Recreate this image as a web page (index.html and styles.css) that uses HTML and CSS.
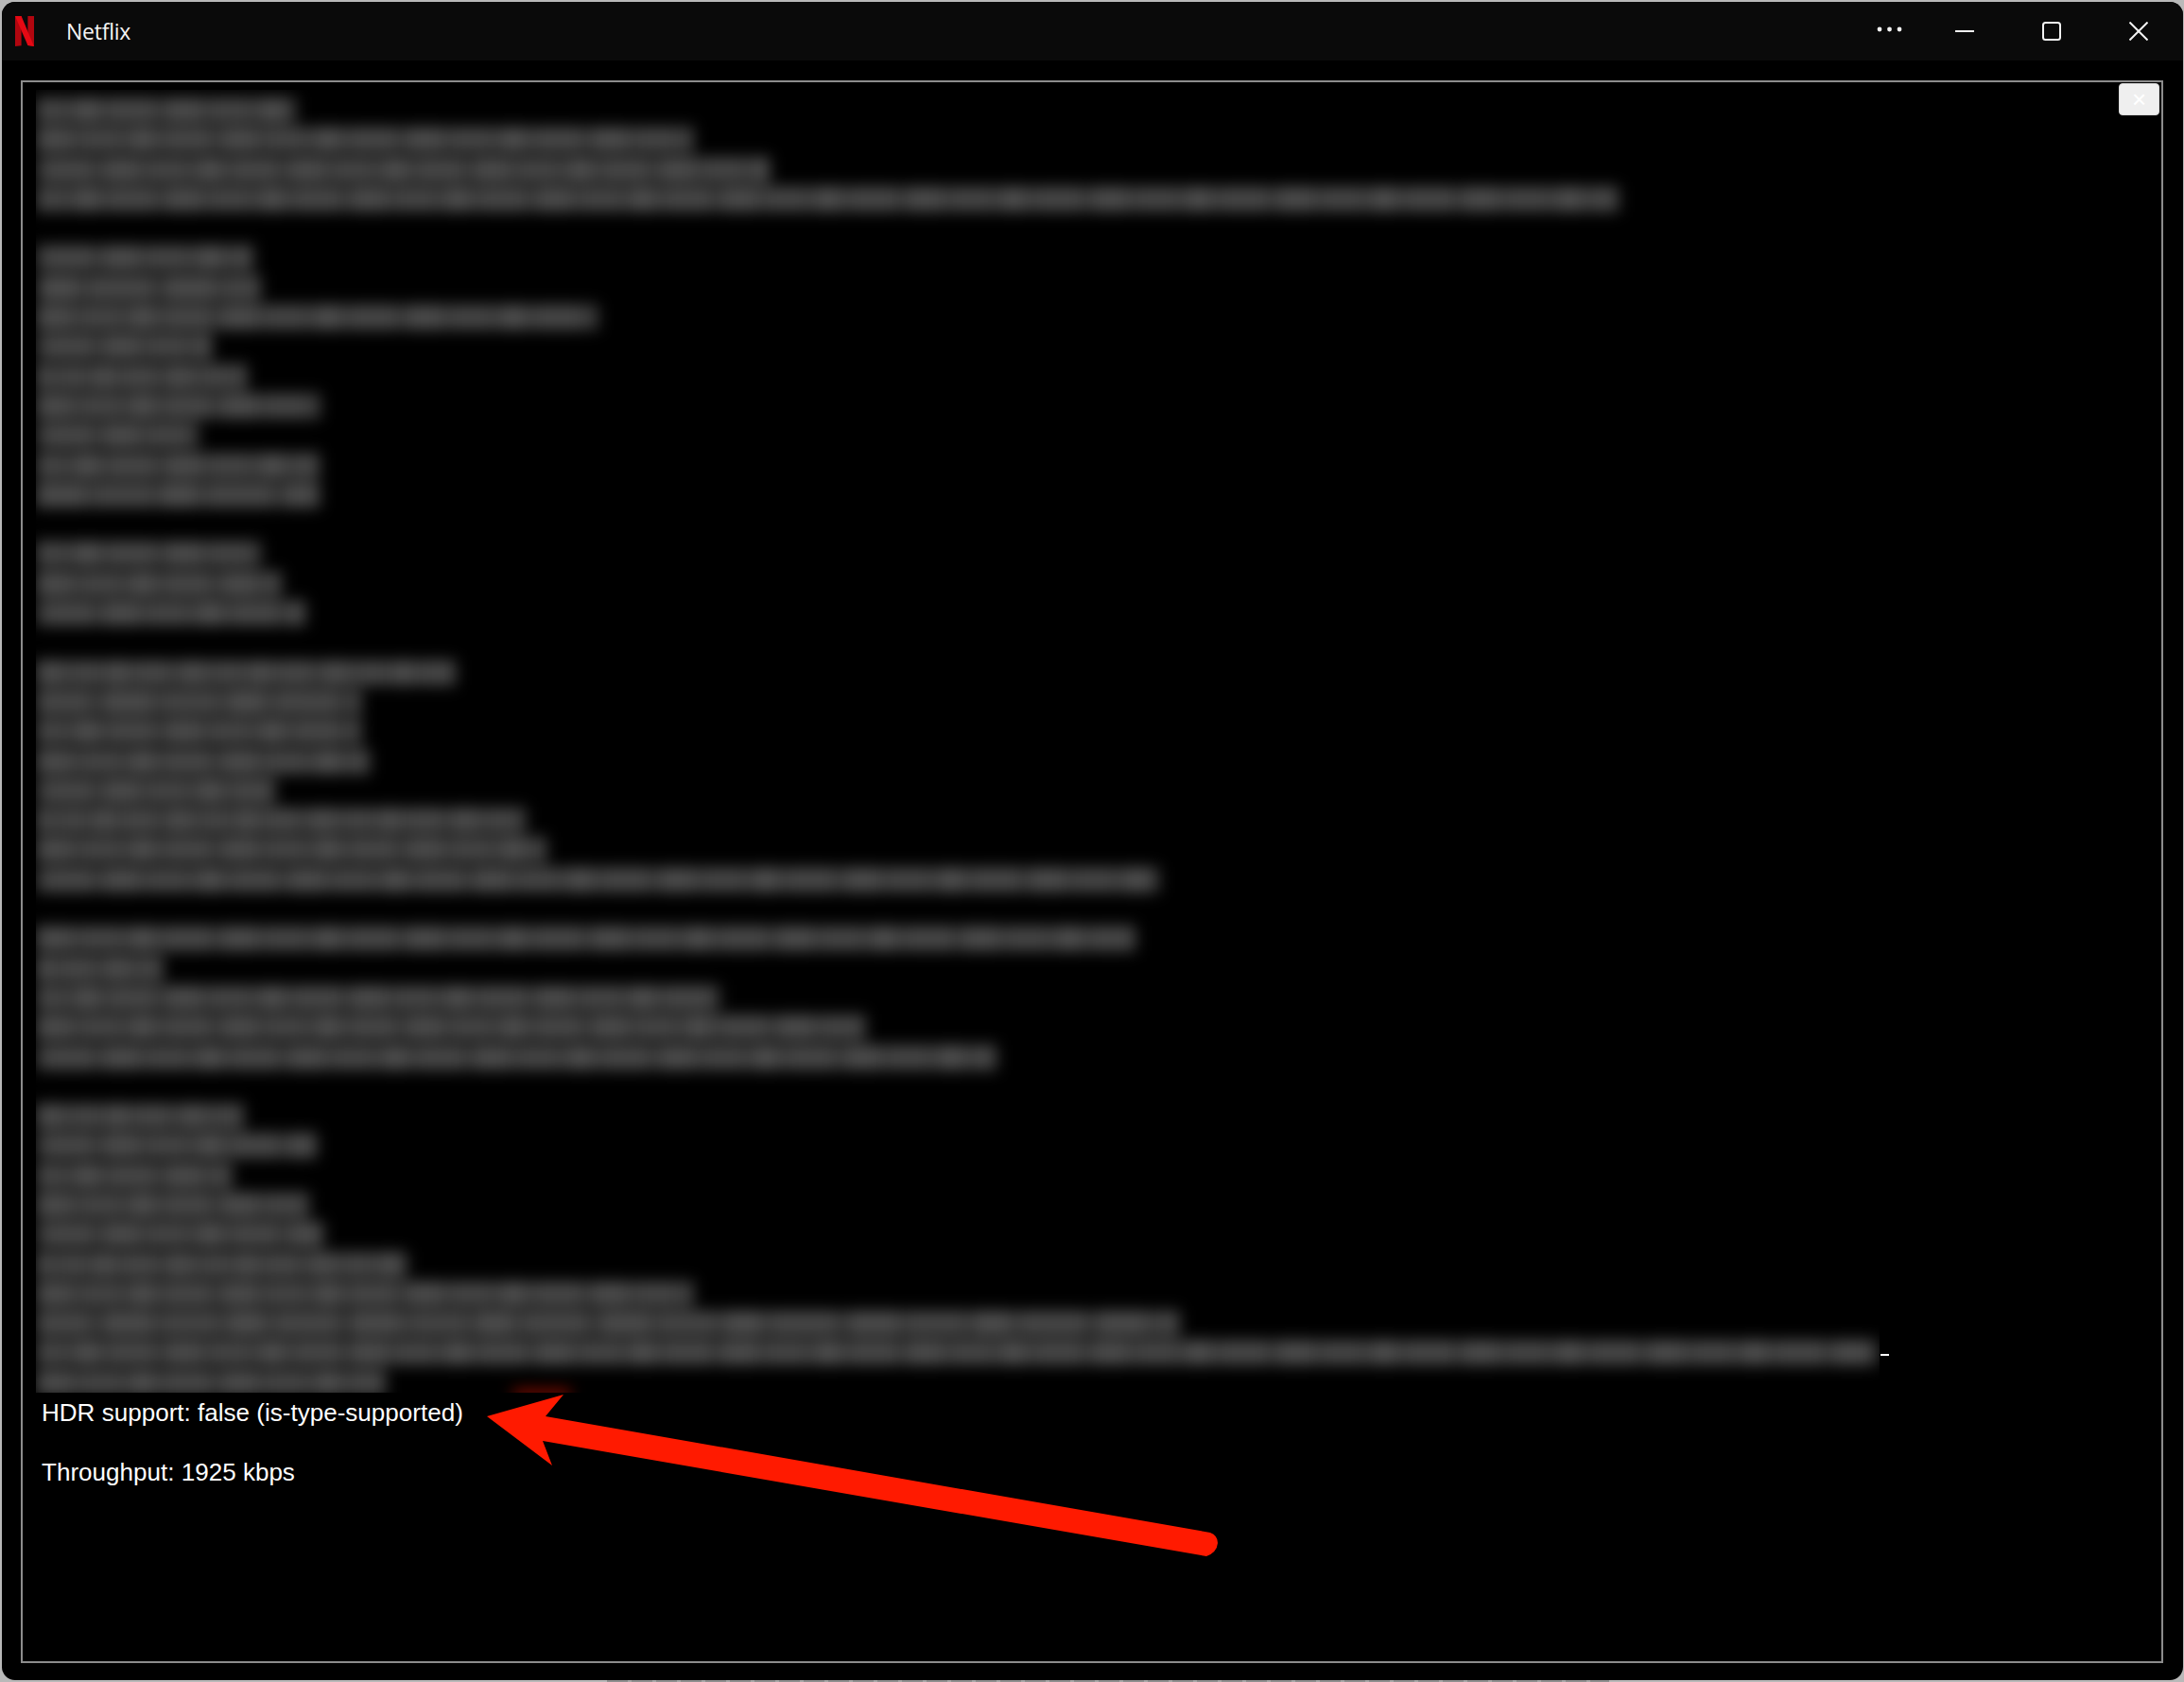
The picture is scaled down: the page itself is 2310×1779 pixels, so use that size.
FILE: index.html
```html
<!DOCTYPE html>
<html lang="en">
<head>
<meta charset="utf-8">
<title>Netflix</title>
<link rel="stylesheet" href="styles.css">
</head>
<body>
<div class="window">
  <header class="titlebar">
    <svg class="logo" viewBox="0 0 20 32" width="20" height="32" aria-hidden="true">
      <path d="M0 0h6.6v31.2L0 32z" fill="#b1060f"/>
      <path d="M13.4 0H20v32l-6.6-.9z" fill="#b1060f"/>
      <path d="M0 0h6.6L20 32l-6.6-.9z" fill="#e50914"/>
    </svg>
    <span class="app-name">Netflix</span>
    <div class="controls">
      <svg class="ctl-more" viewBox="0 0 30 8" width="30" height="8" aria-hidden="true">
        <circle cx="4" cy="4" r="2.4"/><circle cx="14.5" cy="4" r="2.4"/><circle cx="25" cy="4" r="2.4"/>
      </svg>
      <svg class="ctl-min" viewBox="0 0 20 20" width="20" height="20" aria-hidden="true">
        <path d="M0 10h20"/>
      </svg>
      <svg class="ctl-max" viewBox="0 0 20 20" width="20" height="20" aria-hidden="true">
        <rect x="1" y="1" width="18" height="18" rx="2.5"/>
      </svg>
      <svg class="ctl-close" viewBox="0 0 20 20" width="20" height="20" aria-hidden="true">
        <path d="M.5.5l19 19M19.5.5l-19 19"/>
      </svg>
    </div>
  </header>

  <main class="content">
    <section class="frame">
      <button class="overlay-close" type="button" aria-label="Close">×</button>
      <div class="redacted">
        <div class="blur">
          <div class="line" style="width:275px"></div>
          <div class="line" style="width:695px"></div>
          <div class="line" style="width:776px"></div>
          <div class="line" style="width:1674px"></div>
          <div class="line blank"></div>
          <div class="line" style="width:230px"></div>
          <div class="line" style="width:238px"></div>
          <div class="line" style="width:594px"></div>
          <div class="line" style="width:186px"></div>
          <div class="line" style="width:223px"></div>
          <div class="line" style="width:300px"></div>
          <div class="line" style="width:172px"></div>
          <div class="line" style="width:300px"></div>
          <div class="line" style="width:300px"></div>
          <div class="line blank"></div>
          <div class="line" style="width:238px"></div>
          <div class="line" style="width:260px"></div>
          <div class="line" style="width:285px"></div>
          <div class="line blank"></div>
          <div class="line" style="width:444px"></div>
          <div class="line" style="width:344px"></div>
          <div class="line" style="width:344px"></div>
          <div class="line" style="width:353px"></div>
          <div class="line" style="width:253px"></div>
          <div class="line" style="width:518px"></div>
          <div class="line" style="width:540px"></div>
          <div class="line" style="width:1188px"></div>
          <div class="line blank"></div>
          <div class="line" style="width:1163px"></div>
          <div class="line" style="width:135px"></div>
          <div class="line" style="width:724px"></div>
          <div class="line" style="width:878px"></div>
          <div class="line" style="width:1016px"></div>
          <div class="line blank"></div>
          <div class="line" style="width:220px"></div>
          <div class="line" style="width:297px"></div>
          <div class="line" style="width:208px"></div>
          <div class="line" style="width:289px"></div>
          <div class="line" style="width:304px"></div>
          <div class="line" style="width:393px"></div>
          <div class="line" style="width:695px"></div>
          <div class="line" style="width:1210px"></div>
          <div class="line" style="width:1948px"></div>
          <div class="line" style="width:370px"></div>
          <span class="glow"></span>
        </div>
      </div>
      <span class="dash"></span>
      <p class="stat">HDR support: false (is-type-supported)</p>
      <p class="stat">Throughput: 1925 kbps</p>
    </section>
  </main>
</div>
<div class="strip"></div>
<svg class="arrow" viewBox="0 0 2310 1779" width="2310" height="1779" aria-hidden="true">
  <path d="M515 1498L596 1475L577 1498L1280 1621Q1288 1624 1288 1632Q1287 1642 1276 1646L574 1524L584 1550Z"/>
</svg>
</body>
</html>
```
FILE: styles.css
```css
* {
  box-sizing: border-box;
}

html,
body {
  margin: 0;
  height: 1779px;
  overflow: hidden;
}

body {
  position: relative;
  background: #b9b9b9;
  padding: 2px 1px 0 2px;
}

.window {
  height: 1775px;
  background: #000;
  border-radius: 14px;
  overflow: hidden;
  display: flex;
  flex-direction: column;
}

.titlebar {
  height: 62px;
  flex: none;
  background: #0a0a0a;
  display: flex;
  align-items: center;
  padding-left: 14px;
}

.logo {
  flex: none;
  margin-top: -1px;
}

.app-name {
  margin-left: 34px;
  color: #f4f4f4;
  font: 23px/1 "Open Sans", "Noto Sans", sans-serif;
  letter-spacing: -0.25px;
}

.controls {
  margin-left: auto;
  display: flex;
  align-items: center;
  padding-right: 37px;
}

.controls svg {
  flex: none;
  display: block;
}

.ctl-more {
  fill: #f2f2f2;
  margin-top: -4px;
}

.ctl-min {
  margin-left: 54px;
  stroke: #f2f2f2;
  stroke-width: 2;
  fill: none;
}

.ctl-max {
  margin-left: 72px;
  stroke: #f2f2f2;
  stroke-width: 2;
  fill: none;
}

.ctl-close {
  margin-left: 72px;
  stroke: #f2f2f2;
  stroke-width: 2;
  fill: none;
}

.content {
  flex: 1;
  padding: 21px 21px 18px 20px;
  min-height: 0;
}

.frame {
  position: relative;
  height: 100%;
  border: 2px solid #8c8c8c;
  padding: 8px 0 0 14px;
}

.overlay-close {
  position: absolute;
  top: 1px;
  right: 2px;
  width: 43px;
  height: 34px;
  padding: 0;
  border: 1px solid #dcdcdc;
  border-radius: 4px;
  background: #efefef;
  color: #fff;
  font: 26px/30px "Liberation Sans", Arial, sans-serif;
}

.redacted {
  width: 1950px;
  height: 1378px;
  overflow: hidden;
}

.blur {
  padding-top: 8px;
  filter: blur(8px);
}

.line {
  height: 27px;
  margin-bottom: 4.3px;
  background-color: #444;
  background-image: linear-gradient(90deg,
    #4a4a4a 0 20%, #353535 20% 23%, #444 23% 47%, #323232 47% 50%,
    #4c4c4c 50% 65%, #383838 65% 69%, #464646 69% 95%, #343434 95% 100%);
  background-size: 196px 100%;
}

.line:nth-child(3n) {
  background-position: 71px 0;
}

.line:nth-child(3n + 1) {
  background-position: 137px 0;
}

.line:nth-child(7n) {
  background-size: 263px 100%;
}

.line:nth-child(5n) {
  background-size: 151px 100%;
}

.line.blank {
  background: none;
}

.glow {
  position: absolute;
  left: 505px;
  top: 1376px;
  width: 60px;
  height: 8px;
  background: #b01000;
}

.dash {
  position: absolute;
  left: 1965px;
  top: 1345px;
  width: 9px;
  height: 2px;
  background: #fff;
}

.stat {
  margin: 0;
  color: #fff;
  font: 26.05px/30px "Liberation Sans", Arial, sans-serif;
  padding-left: 6px;
}

.stat:first-of-type {
  margin-top: 6px;
  margin-bottom: 33px;
}

.strip {
  height: 2px;
  margin-left: 640px;
  width: 1060px;
  background: repeating-linear-gradient(90deg, #8f8f8f 0 22px, #a9a9a9 22px 26px);
}

.arrow {
  position: absolute;
  left: 0;
  top: 0;
  fill: #ff1a00;
  pointer-events: none;
}
```
